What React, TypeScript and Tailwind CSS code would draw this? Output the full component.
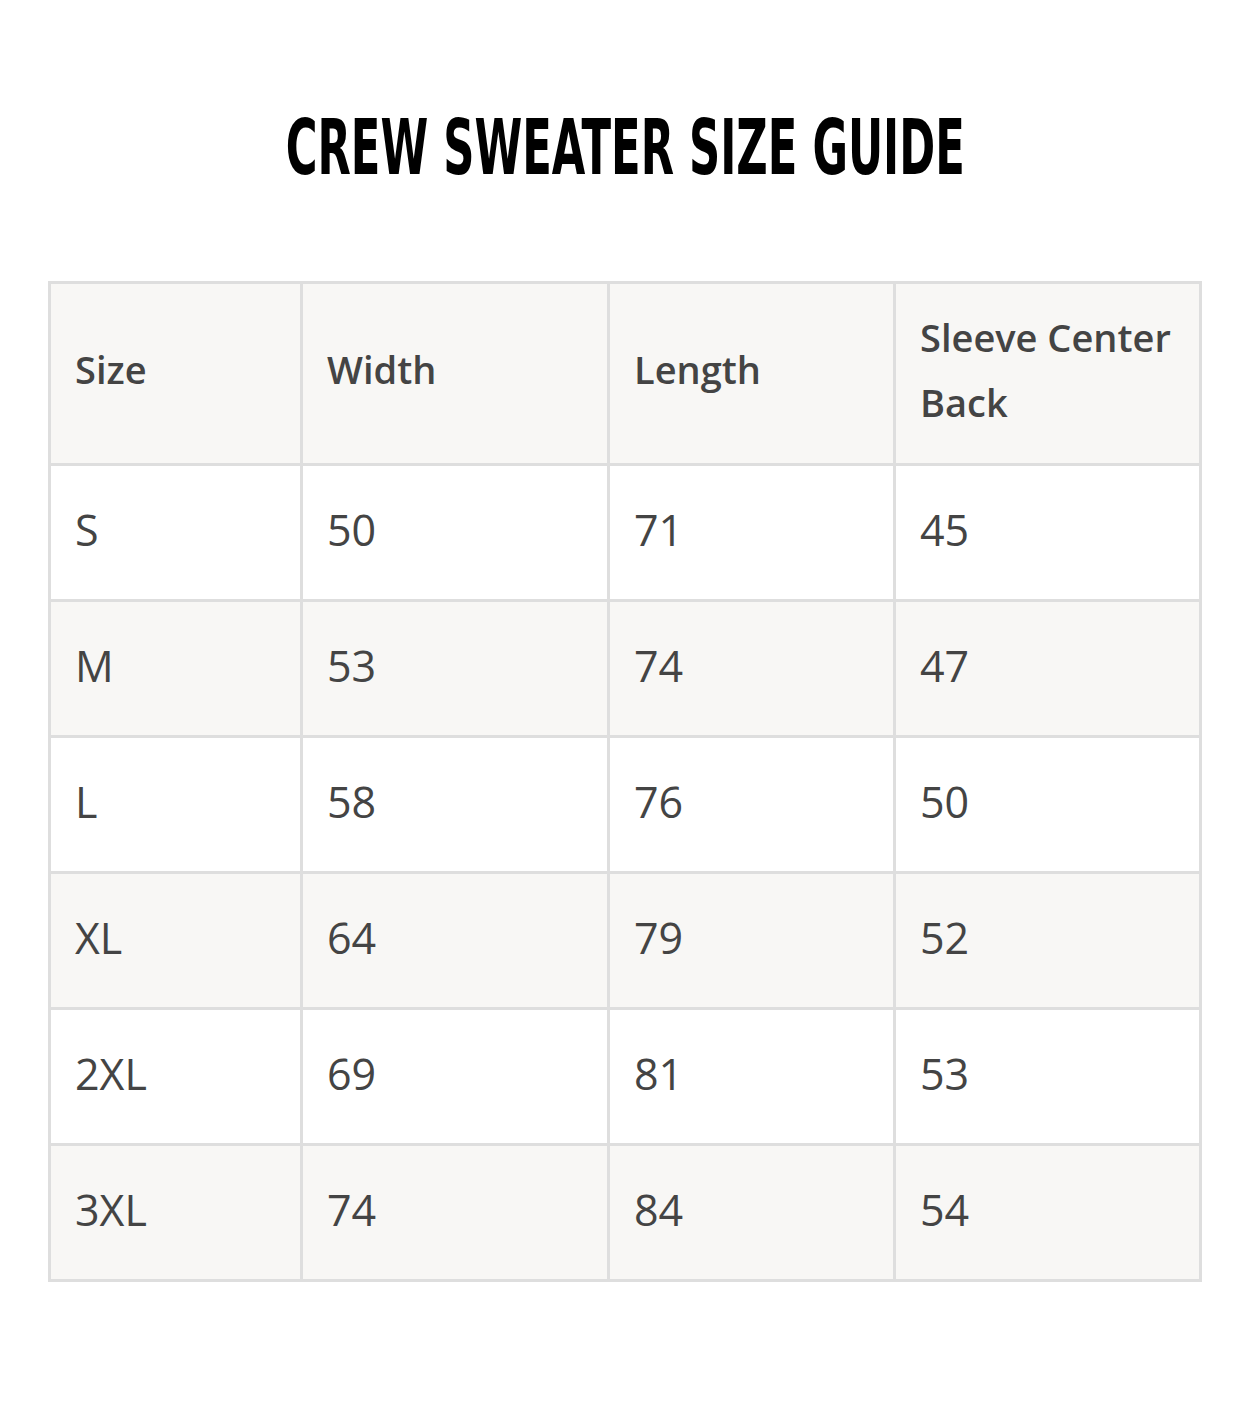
const rows = [
  ["S", "50", "71", "45"],
  ["M", "53", "74", "47"],
  ["L", "58", "76", "50"],
  ["XL", "64", "79", "52"],
  ["2XL", "69", "81", "53"],
  ["3XL", "74", "84", "54"],
];

export default function App() {
  return (
    <div className="min-h-[1406px] bg-white text-[#444444] [font-family:'Open_Sans',sans-serif]">
      <div className="flex justify-center pt-[104px]">
        <h1 className="inline-block origin-center scale-x-[0.625] text-[77px] leading-[88px] font-bold whitespace-nowrap text-black [font-family:'DejaVu_Sans_Condensed','DejaVu_Sans',sans-serif]">
          CREW SWEATER SIZE GUIDE
        </h1>
      </div>

      <div className="px-[48px] pt-[89px]">
        <table className="w-[1151px] table-fixed border-collapse">
          <colgroup>
            <col className="w-[252px]" />
            <col className="w-[307px]" />
            <col className="w-[286px]" />
            <col className="w-[306px]" />
          </colgroup>
          <thead>
            <tr className="h-[182px] bg-[#f8f7f5]">
              {["Size", "Width", "Length", "Sleeve Center Back"].map((h) => (
                <th key={h} className="border-[3px] border-[#dedede] px-6 pt-0 pb-[8px] text-left align-middle text-[38px] leading-[65px] font-semibold">
                  {h}
                </th>
              ))}
            </tr>
          </thead>
          <tbody>
            {rows.map((row, i) => (
              <tr key={row[0]} className={`h-[136px] ${i % 2 === 1 ? "bg-[#f8f7f5]" : "bg-white"}`}>
                {row.map((cell, j) => (
                  <td key={j} className="border-[3px] border-[#dedede] px-6 pt-0 pb-[6px] align-middle text-[43px] leading-[64px] font-normal">
                    {cell}
                  </td>
                ))}
              </tr>
            ))}
          </tbody>
        </table>
      </div>
    </div>
  );
}
